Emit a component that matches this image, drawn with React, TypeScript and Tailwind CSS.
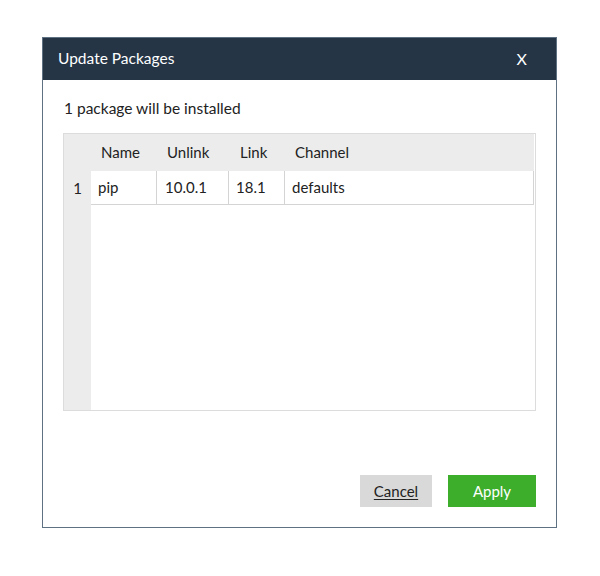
import React from 'react';

interface Pkg {
  name: string;
  unlink: string;
  link: string;
  channel: string;
}

const packages: Pkg[] = [{ name: 'pip', unlink: '10.0.1', link: '18.1', channel: 'defaults' }];

const font = { fontFamily: 'Lato, "Open Sans", sans-serif' };

export default function App() {
  return (
    <div className="w-[600px] h-[576px] bg-white pt-[37px] pl-[42px]" style={font}>
      <div className="w-[515px] h-[491px] border border-[#5d7182] flex flex-col bg-white">
        <div className="h-[42px] bg-[#253546] flex items-center justify-between pl-[15px] pr-[29px] text-white text-[15.5px]">
          <span>Update Packages</span>
          <span className="text-[16px]">X</span>
        </div>

        <div className="flex-1 flex flex-col px-[20px]">
          <p className="mt-[18px] text-[15.5px] text-[#222] pl-px leading-[20px]">
            {packages.length} package will be installed
          </p>

          <div className="mt-[15px] h-[278px] border border-[#dcdcdc] flex">
            <div className="w-[27px] bg-[#ececec] flex flex-col">
              <div className="h-[37px]" />
              {packages.map((_, i) => (
                <div key={i} className="h-[34px] flex items-center justify-center text-[15px] text-[#222]">
                  {i + 1}
                </div>
              ))}
            </div>
            <div className="flex-1 flex flex-col pr-px">
              <div className="h-[37px] bg-[#ececec] flex items-center text-[15px] text-[#222]">
                <div className="w-[66px] pl-[10px]">Name</div>
                <div className="w-[72px] pl-[10px]">Unlink</div>
                <div className="w-[56px] pl-[11px]">Link</div>
                <div className="flex-1 pl-[10px]">Channel</div>
              </div>
              {packages.map((p) => (
                <div key={p.name} className="h-[34px] flex text-[15px] text-[#222] border-b border-[#d4d4d4]">
                  <div className="w-[66px] pl-[7px] flex items-center border-r border-[#d4d4d4]">{p.name}</div>
                  <div className="w-[72px] pl-[8px] flex items-center border-r border-[#d4d4d4]">{p.unlink}</div>
                  <div className="w-[56px] pl-[7px] flex items-center border-r border-[#d4d4d4]">{p.link}</div>
                  <div className="flex-1 pl-[7px] flex items-center border-r border-[#d4d4d4]">{p.channel}</div>
                </div>
              ))}
            </div>
          </div>

          <div className="mt-auto mb-[20px] flex justify-end gap-[16px]">
            <button className="w-[72px] h-[32px] bg-[#d9d9d9] text-[15px] text-[#222] underline underline-offset-2">
              Cancel
            </button>
            <button className="w-[88px] h-[32px] bg-[#3cae2c] text-[15px] text-white">Apply</button>
          </div>
        </div>
      </div>
    </div>
  );
}
